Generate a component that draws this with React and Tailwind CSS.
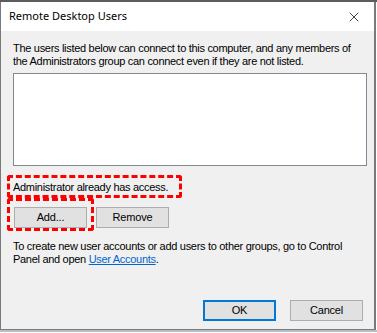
import { X } from 'lucide-react'

const body = { fontFamily: '"Liberation Sans", Arial, sans-serif' }

function Btn({ children, primary }) {
  return (
    <div
      className={`w-[73px] h-[21px] flex items-center justify-center bg-[#e1e1e1] text-[11px] tracking-[-0.2px] text-black ${
        primary ? 'border-2 border-[#0078d7]' : 'border border-[#adadad]'
      }`}
    >
      {children}
    </div>
  )
}

export default function App() {
  return (
    <div className="w-[377px] h-[333px] bg-[#fdfdfd] overflow-hidden relative">
      <div className="h-[2px] bg-[#5c5c5c]" />
      <div className="w-[376px] h-[328px] border-l border-r-2 border-b border-[#7a7a7a] flex flex-col">
        {/* title bar */}
        <div className="h-[29px] bg-white flex items-center justify-between pl-[8px] pr-[12px]">
          <span
            className="text-[11px] text-black"
            style={{ fontFamily: '"Noto Sans", "Open Sans", sans-serif' }}
          >
            Remote Desktop Users
          </span>
          <X size={16} strokeWidth={1.1} className="text-black" />
        </div>

        {/* body */}
        <div
          className="flex-1 bg-[#f0f0f0] pl-[12px] pr-[9px] flex flex-col relative text-[11px] leading-[13px] tracking-[-0.3px] text-black"
          style={body}
        >
          <p className="mt-[11px] whitespace-nowrap">
            The users listed below can connect to this computer, and any members of
            <br />
            the Administrators group can connect even if they are not listed.
          </p>
          <div className="mt-[5px] w-[354px] h-[93px] bg-white border border-[#828790]" />

          <p className="mt-[15px]">Administrator already has access.</p>

          <div className="mt-[13px] flex gap-[9px] pl-px">
            <Btn>Add...</Btn>
            <Btn>Remove</Btn>
          </div>

          <p className="mt-[12px] whitespace-nowrap">
            To create new user accounts or add users to other groups, go to Control
            <br />
            Panel and open <span className="text-[#0066cc] underline">User Accounts</span>.
          </p>

          <div className="mt-auto mb-[8px] flex justify-end gap-[14px] pr-[2px]">
            <Btn primary>OK</Btn>
            <Btn>Cancel</Btn>
          </div>

          {/* red dashed highlights */}
          <div className="absolute left-[6px] top-[144px] w-[175px] h-[23px] border-[3px] border-dashed border-[#ff0000] rounded-[3px]" />
          <div className="absolute left-[6px] top-[167px] w-[87px] h-[33px] border-[3px] border-dashed border-[#ff0000] rounded-[3px]" />
        </div>
      </div>
      <div className="h-[2px] bg-[#b8bec6]" />
    </div>
  )
}
